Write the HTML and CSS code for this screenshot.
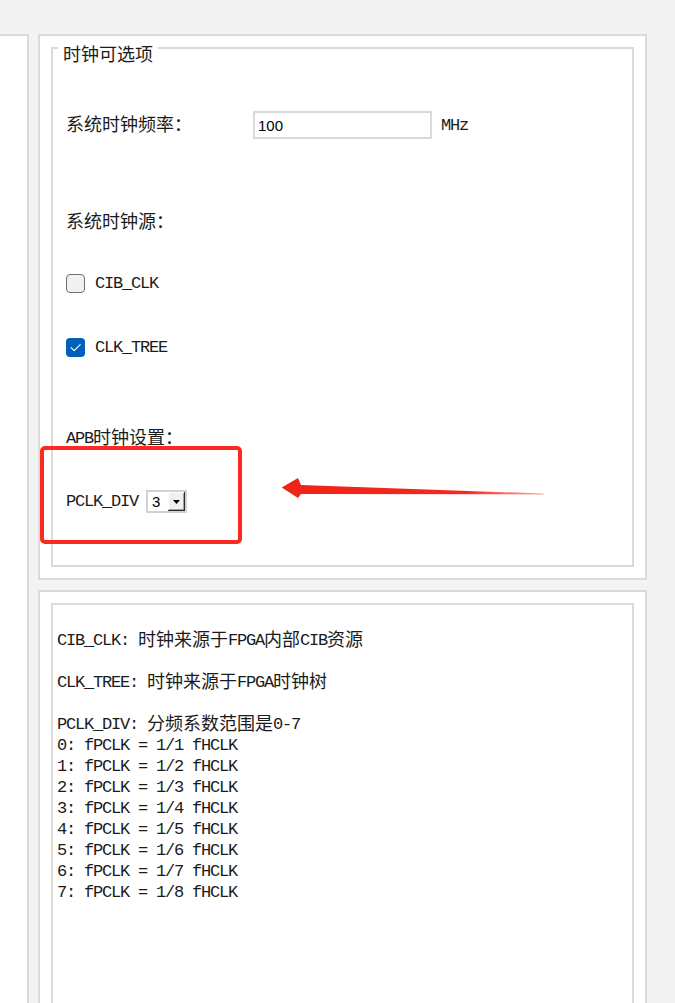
FILE: index.html
```html
<!DOCTYPE html>
<html lang="zh-CN">
<head>
<meta charset="utf-8">
<title>时钟可选项</title>
<link rel="stylesheet" href="styles.css">
</head>
<body>
<div class="app">
  <aside class="side"></aside>
  <main class="main">
    <section class="panel panel-top">
      <div class="group">
        <span class="legend"><span class="zh">时钟可选项</span></span>
        <div class="row row-freq">
          <span class="label-fixed"><span class="zh">系统时钟频率：</span></span>
          <div class="textbox">100</div>
          <span class="unit">MHz</span>
        </div>
        <div class="row row-src"><span class="zh">系统时钟源：</span></div>
        <div class="row row-cb1">
          <span class="checkbox"></span>
          <span class="cb-label">CIB_CLK</span>
        </div>
        <div class="row row-cb2">
          <span class="checkbox checked">
            <svg viewBox="0 0 19 19" width="19" height="19"><path d="M5 9.6 L8.2 12.6 L14.2 6.6" fill="none" stroke="#ffffff" stroke-width="1.2" stroke-linecap="round" stroke-linejoin="round"/></svg>
          </span>
          <span class="cb-label">CLK_TREE</span>
        </div>
        <div class="row row-apb"><span class="apb">APB<span class="zh">时钟设置：</span></span></div>
        <div class="row row-div">
          <span>PCLK_DIV</span>
          <div class="combo">
            <span class="combo-val">3</span>
            <span class="combo-btn">
              <svg viewBox="0 0 7 4" width="7" height="4"><path d="M0 0 H7 L3.5 4 Z" fill="#000"/></svg>
            </span>
          </div>
        </div>
      </div>
      <div class="highlight"></div>
      <svg class="arrow" viewBox="0 0 270 30" width="270" height="30">
        <defs>
          <linearGradient id="arrowGrad" x1="0" y1="0" x2="1" y2="0">
            <stop offset="0" stop-color="#ef2419"/>
            <stop offset="0.7" stop-color="#f4281c"/>
            <stop offset="1" stop-color="#ff5a48" stop-opacity="0.6"/>
          </linearGradient>
        </defs>
        <polygon points="3.7,13.5 20,4 23,11 265,19.6 266,20 265,20.4 23,20 20,24" fill="url(#arrowGrad)"/>
      </svg>
    </section>
    <section class="panel panel-bottom">
      <div class="box">
<pre class="notes">CIB_CLK: <span class="zh">时钟来源于</span>FPGA<span class="zh">内部</span>CIB<span class="zh">资源</span>

CLK_TREE: <span class="zh">时钟来源于</span>FPGA<span class="zh">时钟树</span>

PCLK_DIV: <span class="zh">分频系数范围是</span>0-7
0: fPCLK = 1/1 fHCLK
1: fPCLK = 1/2 fHCLK
2: fPCLK = 1/3 fHCLK
3: fPCLK = 1/4 fHCLK
4: fPCLK = 1/5 fHCLK
5: fPCLK = 1/6 fHCLK
6: fPCLK = 1/7 fHCLK
7: fPCLK = 1/8 fHCLK</pre>
      </div>
    </section>
  </main>
</div>
</body>
</html>
```

FILE: styles.css
```css
html, body {
  margin: 0;
  padding: 0;
}

body {
  background: #f3f3f3;
  width: 675px;
  height: 1003px;
  overflow: hidden;
  font-family: "Liberation Mono", "Noto Sans CJK SC", monospace;
  font-size: 17px;
  line-height: 21px;
  letter-spacing: -1.2px;
  color: #1b1b1b;
}

.zh {
  font-family: "Noto Sans CJK SC", sans-serif;
  font-size: 18px;
  line-height: 14px;
  letter-spacing: 0;
  vertical-align: -1px;
}

.app {
  display: flex;
  padding-top: 34px;
  height: 1100px;
}

.side {
  width: 27px;
  background: #ffffff;
  border-top: 2px solid #dadada;
  border-right: 2px solid #dadada;
}

.main {
  margin-left: 9px;
  width: 609px;
  display: flex;
  flex-direction: column;
  gap: 10px;
}

.panel {
  position: relative;
  background: #ffffff;
  border: 2px solid #dadada;
  box-sizing: border-box;
  padding: 11px;
}

.panel-top {
  height: 546px;
  flex: none;
}

.panel-bottom {
  flex: 1;
  display: flex;
}

.group {
  position: relative;
  height: 100%;
  box-sizing: border-box;
  border: 2px solid #dadada;
  padding-left: 13px;
}

.legend {
  position: absolute;
  left: 5px;
  top: -5px;
  padding: 0 5px;
  background: #ffffff;
  line-height: 18px;
}

.legend .zh {
  vertical-align: 0;
  line-height: 18px;
}

.row {
  display: flex;
  align-items: center;
}

.row-freq {
  margin-top: 62px;
  height: 28px;
}

.label-fixed {
  width: 187px;
  flex: none;
}

.textbox {
  box-sizing: border-box;
  width: 179px;
  height: 28px;
  border: 2px solid #dadada;
  padding-left: 3px;
  display: flex;
  align-items: center;
  font-family: "Liberation Sans", sans-serif;
  font-size: 15px;
  letter-spacing: 0;
  color: #000;
}

.unit {
  margin-left: 9px;
}

.row-src {
  margin-top: 70px;
  height: 21px;
}

.row-cb1 {
  margin-top: 44px;
  height: 19px;
}

.row-cb2 {
  margin-top: 45px;
  height: 19px;
}

.checkbox {
  box-sizing: border-box;
  width: 19px;
  height: 19px;
  border: 1px solid #707070;
  border-radius: 4px;
  background: #f1f1f1;
  flex: none;
  display: flex;
}

.checkbox.checked {
  border: none;
  background: #005fb8;
}

.cb-label {
  margin-left: 10px;
}

.row-apb {
  margin-top: 71px;
  height: 21px;
}

.apb {
  line-height: 21px;
}

.row-div {
  margin-top: 41px;
  height: 23px;
}

.combo {
  margin-left: 8px;
  box-sizing: border-box;
  width: 41px;
  height: 23px;
  border: 2px solid #d2d2d2;
  background: #ffffff;
  display: flex;
}

.combo-val {
  width: 20px;
  box-sizing: border-box;
  padding-left: 4px;
  font-family: "Liberation Sans", sans-serif;
  font-size: 15px;
  line-height: 19px;
  letter-spacing: 0;
  color: #000;
}

.combo-btn {
  box-sizing: border-box;
  width: 17px;
  height: 19px;
  background: #f0f0f0;
  border-right: 1px solid #2a2a2a;
  border-bottom: 1px solid #2a2a2a;
  box-shadow: inset 1px 1px 0 #ffffff, inset -1px -1px 0 #a0a0a0;
  display: flex;
  align-items: center;
  justify-content: center;
  padding-top: 2px;
}

.highlight {
  position: absolute;
  left: 0;
  top: 410px;
  width: 202px;
  height: 98px;
  box-sizing: border-box;
  border: 4px solid #fb2a1e;
  border-radius: 5px;
}

.arrow {
  position: absolute;
  left: 238px;
  top: 438px;
}

.box {
  flex: 1;
  box-sizing: border-box;
  border: 2px solid #dadada;
}

.notes {
  margin: 0;
  padding: 25px 0 0 4px;
  font: inherit;
  line-height: 21px;
  letter-spacing: -1.2px;
}
```
